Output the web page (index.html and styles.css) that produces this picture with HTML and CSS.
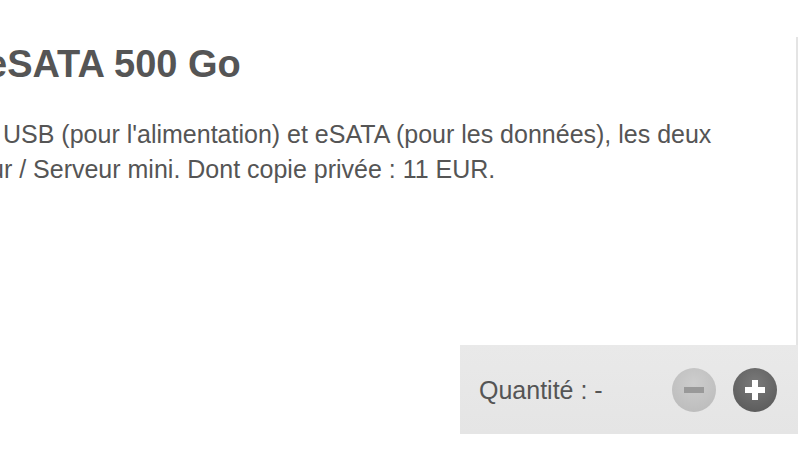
FILE: index.html
```html
<!DOCTYPE html>
<html lang="fr">
<head>
    <meta charset="UTF-8">
    <meta name="viewport" content="width=device-width, initial-scale=1.0">
    <title>eSATA 500 Go</title>
    <link rel="stylesheet" href="styles.css">
</head>
<body>

    <div class="product">
        <h1 class="product-title">eSATA 500 Go</h1>
        <div class="product-desc">
            <div class="line line-first">USB (pour l'alimentation) et eSATA (pour les données), les deux</div>
            <div class="line line-second">ur / Serveur mini. Dont copie privée : 11 EUR.</div>
        </div>

        <div class="qty-box">
            <span class="qty-label">Quantité : -</span>
            <div class="qty-buttons">
                <button class="qty-btn minus" aria-label="moins"><span class="bar"></span></button>
                <button class="qty-btn plus" aria-label="plus"><span class="bar"></span><span class="bar vert"></span></button>
            </div>
        </div>
    </div>

</body>
</html>
```

FILE: styles.css
```css
body {
    margin: 0;
    background: #fff;
    font-family: "Liberation Sans", Arial, sans-serif;
    color: #555;
    overflow: hidden;
}
.product {
    margin-top: 37px;
    width: 796px;
    height: 397px;
    border-right: 2px solid #e4e4e4;
    display: flex;
    flex-direction: column;
}
.product-title {
    margin: 5px 0 0 -14px;
    font-size: 38px;
    line-height: 44px;
    font-weight: bold;
    color: #555;
    white-space: nowrap;
}
.product-desc {
    margin-top: 31px;
    font-size: 25px;
    line-height: 35px;
}
.line {
    white-space: nowrap;
}
.line-first {
    padding-left: 3px;
}
.line-second {
    margin-left: -10px;
}
.qty-box {
    margin-top: auto;
    margin-right: -2px;
    align-self: flex-end;
    width: 319px;
    height: 89px;
    padding-left: 19px;
    display: flex;
    align-items: center;
    background: linear-gradient(#e9e9e9, #e5e5e5);
}
.qty-label {
    font-size: 25px;
    color: #555;
    margin-top: 2px;
}
.qty-buttons {
    margin-left: auto;
    margin-right: 21px;
    display: flex;
    gap: 17px;
}
.qty-btn {
    position: relative;
    width: 44px;
    height: 44px;
    border: none;
    border-radius: 50%;
    padding: 0;
    cursor: pointer;
}
.qty-btn.minus {
    background: radial-gradient(circle at 50% 35%, #cdcdcd, #b9b9b9);
}
.qty-btn.plus {
    background: radial-gradient(circle at 50% 35%, #7a7a7a, #555);
}
.bar {
    position: absolute;
    left: 12px;
    top: 19px;
    width: 20px;
    height: 6px;
}
.minus .bar {
    background: #999;
}
.plus .bar {
    background: #fff;
}
.plus .bar.vert {
    left: 19px;
    top: 12px;
    width: 6px;
    height: 20px;
}
```
